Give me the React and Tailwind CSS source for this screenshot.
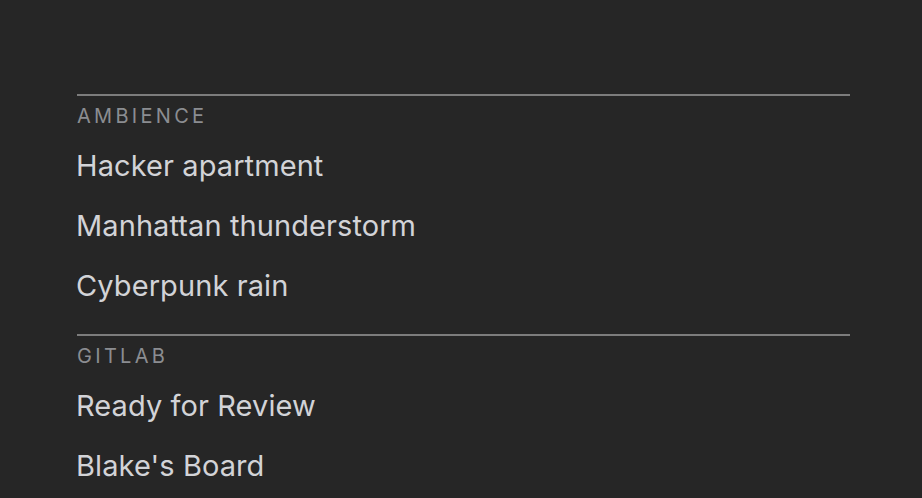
import React from "react";

const sections = [
  { title: "AMBIENCE", items: ["Hacker apartment", "Manhattan thunderstorm", "Cyberpunk rain"] },
  { title: "GITLAB", items: ["Ready for Review", "Blake's Board"] },
];

export default function App() {
  return (
    <div
      className="w-[922px] h-[498px] overflow-hidden bg-[#262626] pt-[94px] pl-[77px]"
      style={{ fontFamily: 'Inter, "Noto Sans", sans-serif' }}
    >
      <div className="w-[773px] flex flex-col gap-[19px]">
        {sections.map((s) => (
          <div key={s.title} className="flex flex-col">
            <div className="h-[2px] bg-[#7c7c7c]" />
            <div className="h-[39px] flex items-center text-[20px] tracking-[0.165em] text-[#8b8d91] leading-none">
              {s.title}
            </div>
            {s.items.map((it) => (
              <div
                key={it}
                className="h-[60px] flex items-center text-[29px] text-[#d2d3d7] leading-none -ml-[1px] tracking-[0.003em]"
              >
                {it}
              </div>
            ))}
          </div>
        ))}
      </div>
    </div>
  );
}
